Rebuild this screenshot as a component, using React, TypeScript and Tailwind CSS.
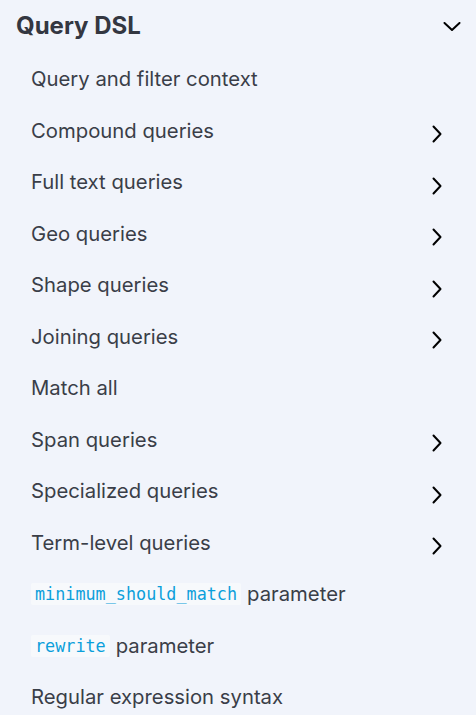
import React from 'react';

type Item = { label: React.ReactNode; nested?: boolean };

const Code = ({ children }: { children: React.ReactNode }) => (
  <code
    className="mr-[6px] rounded-[2px] bg-[#f7f9fc] px-[4px] py-[1px] align-[1px] text-[16.8px] leading-[20px] text-[#0b9fdb]"
    style={{ fontFamily: '"DejaVu Sans Mono", "Liberation Mono", monospace' }}
  >
    {children}
  </code>
);

const items: Item[] = [
  { label: 'Query and filter context' },
  { label: 'Compound queries', nested: true },
  { label: 'Full text queries', nested: true },
  { label: 'Geo queries', nested: true },
  { label: 'Shape queries', nested: true },
  { label: 'Joining queries', nested: true },
  { label: 'Match all' },
  { label: 'Span queries', nested: true },
  { label: 'Specialized queries', nested: true },
  { label: 'Term-level queries', nested: true },
  { label: <><Code>minimum_should_match</Code>parameter</> },
  { label: <><Code>rewrite</Code>parameter</> },
  { label: 'Regular expression syntax' },
];

const ChevronRight = () => (
  <svg width="10" height="18" viewBox="0 0 10 18" fill="none" className="mt-[10px]">
    <polyline points="1.5,1.5 8.5,9 1.5,16.5" stroke="#000" strokeWidth="2" strokeLinecap="round" strokeLinejoin="round" />
  </svg>
);

const ChevronDown = () => (
  <svg width="18" height="9" viewBox="0 0 18 9" fill="none">
    <polyline points="1.5,1 9,8 16.5,1" stroke="#000" strokeWidth="2" strokeLinecap="round" strokeLinejoin="round" />
  </svg>
);

export default function App() {
  return (
    <div
      className="h-[715px] w-[476px] overflow-hidden bg-[#f1f4fb] text-[#3a3e48]"
      style={{ fontFamily: 'Inter, "Noto Sans", sans-serif' }}
    >
      <div className="flex h-[52px] items-center justify-between pl-[16px] pr-[15px]">
        <span className="text-[24px] font-bold leading-[30px] text-[#343741]">Query DSL</span>
        <ChevronDown />
      </div>
      <ul>
        {items.map((item, i) => (
          <li key={i} className="flex h-[51.5px] items-center justify-between pl-[31px] pr-[34px]">
            <span className="pt-[3px] text-[20.3px] leading-[26px]">{item.label}</span>
            {item.nested && <ChevronRight />}
          </li>
        ))}
      </ul>
    </div>
  );
}
